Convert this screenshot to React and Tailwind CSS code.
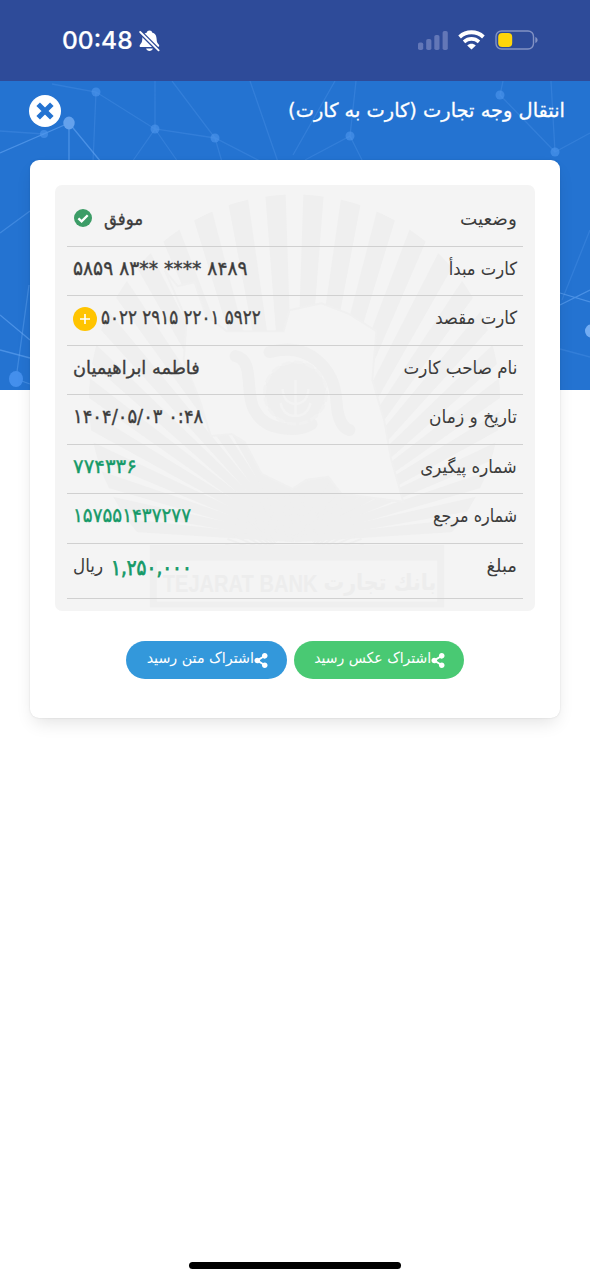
import { FaShareAlt } from 'react-icons/fa';

const rows = [
  { label: 'وضعیت', labelClass: 'scale-x-[1.02]', kind: 'status' },
  { label: 'کارت مبدأ', labelClass: 'scale-x-[0.91]', value: '۵۸۵۹ ۸۳** **** ۸۴۸۹', valueClass: 'scale-x-[1.04] scale-y-[1.08]' },
  { label: 'کارت مقصد', labelClass: 'scale-x-[0.92]', value: '۵۰۲۲ ۲۹۱۵ ۲۲۰۱ ۵۹۲۲', valueClass: 'scale-x-[0.93] scale-y-[1.08]', kind: 'card' },
  { label: 'نام صاحب کارت', labelClass: 'scale-x-[0.93]', value: 'فاطمه ابراهیمیان', valueClass: 'scale-x-[0.985]' },
  { label: 'تاریخ و زمان', labelClass: 'scale-x-[0.945]', value: '۱۴۰۴/۰۵/۰۳ ۰:۴۸', valueClass: 'scale-x-[1] scale-y-[1.08]' },
  { label: 'شماره پیگیری', labelClass: 'scale-x-[0.92]', value: '۷۷۴۳۳۶', valueClass: 'scale-x-[1.1] scale-y-[1.08] text-[#159a68]' },
  { label: 'شماره مرجع', labelClass: 'scale-x-[0.885]', value: '۱۵۷۵۵۱۴۳۷۲۷۷', valueClass: 'scale-x-[1.017] scale-y-[1.08] text-[#159a68]' },
  { label: 'مبلغ', labelClass: 'scale-x-[1]', kind: 'amount' },
];

function StatusBar() {
  return (
    <header className="flex h-[81px] items-center justify-between bg-[#2e4b99] pr-[52px] pl-[62px] text-white">
      <div className="flex items-center gap-1.5">
        <span className="font-['Inter',sans-serif] text-[24.5px] leading-none font-medium [-webkit-text-stroke:0.2px]">00:48</span>
        <svg className="h-[22px] w-[21px]" viewBox="0 0 21 22" fill="none">
          <path d="M10.5 .6C8.9 .6 8 1.6 7.9 2.4C4.4 3.4 3.4 6.1 3.3 9C3.2 12.4 2 13.5 .9 14.9C.2 16 .7 17.1 1.9 17.1H18.9C20.2 17.1 20.6 15.8 19.9 14.8C18.7 13.4 17.7 12.4 17.6 9C17.5 6.1 16.6 3.4 13.1 2.4C13 1.6 12.1 .6 10.5 .6ZM7.1 18.6C7.7 21.8 13.3 21.8 13.9 18.6Z" fill="white" />
          <path d="M1.2 2L19.6 20.4" stroke="#2e4b99" strokeWidth="4.4" />
          <path d="M1.2 2L19.6 20.4" stroke="white" strokeWidth="1.8" strokeLinecap="round" />
        </svg>
      </div>
      <div className="flex items-center">
        <svg className="mr-[10px] h-5 w-[30px]" viewBox="0 0 30 20" fill="#6377b7">
          <rect x="0" y="11.5" width="5.2" height="7.5" rx="1.8" />
          <rect x="8.2" y="8" width="5.2" height="11" rx="1.8" />
          <rect x="16.3" y="4" width="5.2" height="15" rx="1.8" />
          <rect x="24.6" y="0" width="5.2" height="19" rx="1.8" />
        </svg>
        <svg className="-mt-0.5 mr-[10px] h-5 w-[27px]" viewBox="0 0 27 20" fill="none">
          <path d="M1.6 6.9C8.5.8 18.5.8 25.4 6.9" stroke="white" strokeWidth="4" />
          <path d="M6 11.8C10.5 7.9 16.5 7.9 21 11.8" stroke="white" strokeWidth="3.6" />
          <path d="M9.2 15.4C11.7 13.1 15.3 13.1 17.8 15.4L13.5 19.6Z" fill="white" />
        </svg>
        <svg className="-mt-0.5 h-5 w-[43px]" viewBox="0 0 43 20">
          <rect x="1" y="1" width="37.5" height="18" rx="5.5" fill="none" stroke="#8292c4" strokeWidth="1.4" />
          <rect x="3.2" y="3" width="14" height="14" rx="4" fill="#ffd60a" />
          <path d="M40.3 7V13C43.3 12.2 43.3 7.8 40.3 7Z" fill="#8292c4" />
        </svg>
      </div>
    </header>
  );
}

function Network() {
  return (
    <svg className="absolute inset-x-0 top-0 h-[309px] w-full bg-[#2473d1]" viewBox="0 81 590 309">
      <g fill="none" stroke="#6aa9f5" strokeWidth="1.3">
        <path opacity=".22" d="M52 84L96 92L155 129L215 138L262 162M155 81V129L132 162M155 129L178 162M172 81L215 138L222 162M96 92L93 162M44 134L0 131M250 81L278 162M335 81L293 155M356 81L350 136L305 160M350 136L363 162M503 81L500 95L555 152M551 81L555 152L590 133M590 230L562 300M560 349L590 357" />
        <path opacity=".55" d="M69 123L0 153M69 123V162M69 123L101 162M0 315L30 340M0 350L30 358M560 305L590 290M560 293L590 302" />
        <path opacity=".4" d="M0 233L30 211M16 379L29 285M16 379L30 384" />
      </g>
      <g fill="#4f97ee">
        <g opacity=".6">
          <circle cx="96" cy="92" r="4.5" />
          <circle cx="155" cy="129" r="4.5" />
          <circle cx="215" cy="138" r="4.5" />
          <circle cx="44" cy="134" r="4" />
          <circle cx="350" cy="136" r="4.5" />
          <circle cx="500" cy="95" r="4.5" />
          <circle cx="555" cy="152" r="4.5" />
        </g>
        <ellipse cx="69" cy="123" rx="5.7" ry="6.5" fill="#64a1ec" />
        <ellipse cx="16" cy="379" rx="7" ry="8" fill="#448fec" />
        <ellipse cx="591" cy="331" rx="6" ry="6.5" fill="#73adf3" />
      </g>
    </svg>
  );
}

const rayAngles = Array.from({ length: 28 }, (_, i) => (i - 13.5) * 6.3);
const fineAngles = Array.from({ length: 35 }, (_, i) => (i - 17) * 4.6);

function Watermark() {
  return (
    <svg className="absolute inset-0 h-full w-full" viewBox="55 185 481 426">
      <defs>
        <clipPath id="disc"><circle cx="295" cy="400" r="206" /></clipPath>
      </defs>
      <g clipPath="url(#disc)" fill="#efefef">
        {rayAngles.map((a) => (
          <path key={a} d="M292.5 540L284.5 180H305.5L297.5 540Z" transform={`rotate(${a} 295 540)`} />
        ))}
      </g>
      <path fill="#f4f4f4" stroke="#f0f0f0" strokeWidth="2" d="M165 270L178 286L195 282L206 315L227 331L284 331L290 310L322 303L350 314L377 331L373 380L385 421L392 460L404 502L342 494L329 477L307 480L293 489L262 474L245 442L232 434L211 436L200 400L184 360L187 320Z" />
      <path fill="none" stroke="#efefef" strokeWidth="12" strokeLinecap="round" d="M236 356C256 360 244 395 256 412C267 432 298 432 312 424M270 352C311 341 335 370 337 401C338 418 343 428 350 430" />
      <circle cx="296" cy="393" r="31" fill="#efefef" stroke="#f1f1f1" strokeWidth="3" strokeDasharray="9 3" />
      <path fill="none" stroke="#f3f3f3" strokeWidth="2.5" d="M296 380V417M283 389Q284 403 296 404Q308 403 309 389M281 403Q284 416 296 416Q308 416 311 403" />
      <g stroke="#efefef" strokeWidth="2">
        {fineAngles.map((a) => (
          <path key={a} d="M295 536V493" transform={`rotate(${a} 295 565)`} />
        ))}
      </g>
      <path fill="#efefef" fillRule="evenodd" d="M150 545H445V608H150ZM157 561V602H438V561Z" />
      <g fill="#ededed" fontWeight="700">
        <text x="163" y="592" fontSize="24" fontFamily="Liberation Sans, sans-serif" textLength="155" lengthAdjust="spacingAndGlyphs">TEJARAT BANK</text>
        <text x="437" y="590" fontSize="23" fontFamily="DejaVu Sans, sans-serif" direction="rtl" textLength="113" lengthAdjust="spacingAndGlyphs">بانك تجارت</text>
      </g>
    </svg>
  );
}

function Value({ row }) {
  const base = 'inline-block origin-left whitespace-nowrap';
  if (row.kind === 'status') {
    return (
      <div className="flex items-center gap-[12px]">
        <svg className="-mt-0.5 ml-px h-[18px] w-[18px]" viewBox="0 0 18 18">
          <circle cx="9" cy="9" r="9" fill="#3c9c66" />
          <path d="M4.4 9.3L7.6 12.4L13.7 6.2" fill="none" stroke="white" strokeWidth="2.3" />
        </svg>
        <span dir="rtl" className={`${base} scale-x-[0.92] [-webkit-text-stroke:0.35px]`}>موفق</span>
      </div>
    );
  }
  if (row.kind === 'amount') {
    return (
      <div className="flex h-[44px] items-center">
        <span dir="rtl" className="inline-block w-[38px] origin-left scale-x-[0.93] text-left">ریال</span>
        <span className={`${base} mt-0.5 scale-x-[0.92] scale-y-[1.08] text-[20px] text-[#159a68] [-webkit-text-stroke:0.7px]`}>۱,۲۵۰,۰۰۰</span>
      </div>
    );
  }
  return (
    <div className="flex items-center gap-1">
      {row.kind === 'card' && (
        <svg className="mt-0.5 h-6 w-6" viewBox="0 0 24 24">
          <circle cx="12" cy="12" r="12" fill="#ffc400" />
          <path d="M12 7V17M7 12H17" stroke="white" strokeWidth="1.6" />
        </svg>
      )}
      <span dir="auto" className={`${base} [-webkit-text-stroke:0.35px] ${row.valueClass}`}>{row.value}</span>
    </div>
  );
}

function ShareButton({ text, className, textClass }) {
  return (
    <button className={`flex h-[38px] items-center rounded-full pr-[19px] text-[15px] text-white ${className}`}>
      <FaShareAlt className="h-[15px] w-[14px] shrink-0" />
      <span className={`-mt-1 inline-block origin-right whitespace-nowrap ${textClass}`}>{text}</span>
    </button>
  );
}

export default function App() {
  return (
    <div className="flex h-[1280px] w-[590px] flex-col overflow-hidden bg-white font-['DejaVu_Sans',sans-serif]">
      <StatusBar />
      <main className="relative flex-1">
        <Network />
        <div className="relative flex h-[79px] items-start justify-between pt-[14px] pr-[25px] pl-[29px]">
          <svg className="h-8 w-8" viewBox="0 0 32 32">
            <circle cx="16" cy="16" r="16" fill="white" />
            <path d="M10.4 10.4L21.6 21.6M21.6 10.4L10.4 21.6" stroke="#2473d1" strokeWidth="5.6" strokeLinecap="square" strokeLinejoin="round" transform="translate(1.6 1.6) scale(.9)" />
          </svg>
          <h1 dir="rtl" className="pt-px text-[19.4px] leading-[30px] whitespace-nowrap text-white [-webkit-text-stroke:0.3px]">انتقال وجه تجارت (کارت به کارت)</h1>
        </div>
        <section className="relative mx-[30px] h-[558px] rounded-[9px] bg-white px-[25px] pt-[25px] shadow-[0_8px_18px_-4px_rgba(0,0,0,0.12),0_0_2px_rgba(0,0,0,0.12)]">
          <div className="relative h-[426px] rounded-[7px] bg-[#f4f4f4] px-3 pt-3">
            <Watermark />
            <div dir="rtl" className="relative text-[18px] text-[#3c3c3c]">
              {rows.map((row) => (
                <div
                  key={row.label}
                  className={`flex justify-between border-b-[1.5px] border-[#d0d0d0] px-1.5 leading-[44px] ${row.kind === 'amount' ? 'h-[55px]' : 'h-[49.5px]'}`}
                >
                  <span className={`inline-block origin-right ${row.labelClass}`}>{row.label}</span>
                  <div dir="ltr">
                    <Value row={row} />
                  </div>
                </div>
              ))}
            </div>
          </div>
          <div dir="rtl" className="mt-[30px] flex justify-center gap-[7px]">
            <ShareButton text="اشتراک عکس رسید" className="w-[170px] bg-[#49c973]" textClass="scale-x-[0.935]" />
            <ShareButton text="اشتراک متن رسید" className="w-[161px] bg-[#3398db]" textClass="scale-x-[0.95]" />
          </div>
        </section>
      </main>
      <div className="mx-auto mb-[11px] h-[7px] w-[212px] rounded-full bg-black" />
    </div>
  );
}
